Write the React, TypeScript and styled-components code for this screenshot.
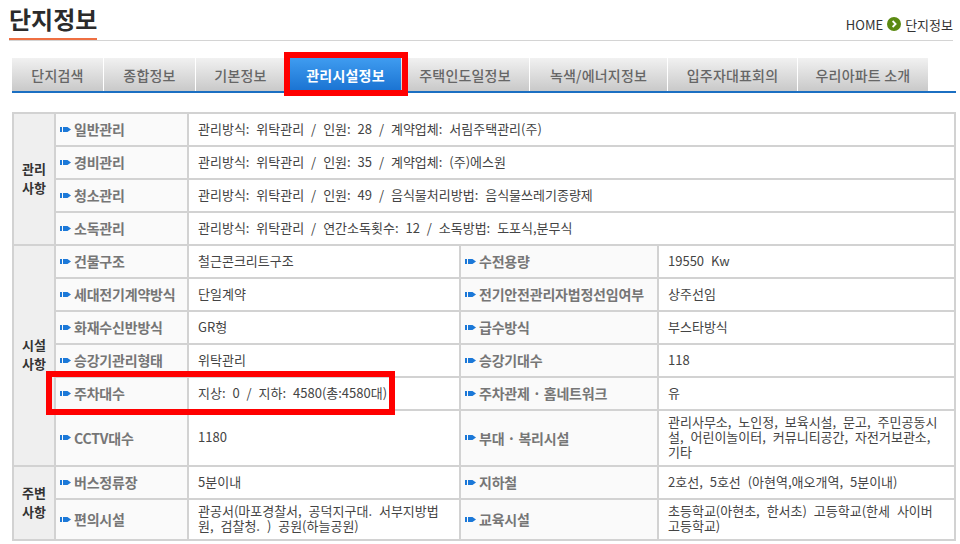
import React from "react";
import styled, { createGlobalStyle } from "styled-components";

const Global = createGlobalStyle`
  html, body { margin: 0; padding: 0; background: #fff; }
  body { font-family: "Noto Sans CJK KR", "Noto Sans", sans-serif; color: #333; width: 960px; height: 544px; overflow: hidden; }
`;

const Page = styled.div`
  position: relative;
  width: 960px;
  height: 544px;
  padding: 0 7px 0 9px;
  box-sizing: border-box;
`;

const Header = styled.header`
  display: flex;
  justify-content: space-between;
  align-items: flex-end;
  height: 41px;
  border-bottom: 1px solid #d4d4d4;
  box-sizing: border-box;
`;

const Title = styled.h1`
  margin: 0;
  height: 40px;
  box-sizing: border-box;
  border-bottom: 2px solid #ee6f42;
  font-size: 24px;
  line-height: 38px;
  font-weight: 700;
  color: #2b2b2b;
`;

const Crumb = styled.div`
  display: flex;
  align-items: center;
  gap: 4px;
  height: 40px;
  padding-top: 8px;
  box-sizing: border-box;
  font-size: 13px;
  color: #333;
`;

const TabBar = styled.nav`
  display: flex;
  margin: 17px 0 0 3px;
  width: 944px;
  height: 35px;
  box-sizing: border-box;
  border-bottom: 2px solid #1b6fc2;
`;

const Tab = styled.div<{ $w: number; $active?: boolean }>`
  flex: 0 0 ${(p) => p.$w}px;
  height: 33px;
  display: flex;
  align-items: center;
  justify-content: center;
  box-sizing: border-box;
  font-size: 14px;
  letter-spacing: 0.2px;
  font-weight: ${(p) => (p.$active ? 700 : 500)};
  color: ${(p) => (p.$active ? "#fff" : "#666")};
  background: ${(p) =>
    p.$active ? "linear-gradient(#3f9cf0, #1a73d2)" : "linear-gradient(#f1f1f1, #c9c9c9)"};
  border-right: ${(p) => (p.$active ? "0" : "1px solid #fff")};
`;

const TabGap = styled.div<{ $w: number }>`
  flex: 0 0 ${(p) => p.$w}px;
`;

const Table = styled.table`
  margin: 19px 0 0 3px;
  width: 944px;
  border-collapse: collapse;
  table-layout: fixed;
`;

const Group = styled.th`
  background: #efefef;
  border: 2px solid #d2d2d2;
  font-size: 13px;
  line-height: 19px;
  font-weight: 700;
  color: #333;
  padding: 0 0 3px;
`;

const Head = styled.th`
  background: #fafafa;
  border: 2px solid #d2d2d2;
  padding: 0 0 1px 4px;
  text-align: left;
  font-size: 14px;
  letter-spacing: -0.2px;
  font-weight: 700;
  color: #767676;
  white-space: nowrap;
`;

const HeadInner = styled.span`
  display: flex;
  align-items: center;
  gap: 3px;
`;

const Cell = styled.td`
  background: #fff;
  border: 2px solid #d2d2d2;
  padding: 0 9px 3px;
  font-size: 13px;
  word-spacing: 4px;
  line-height: 15px;
  color: #444;
`;

const Row = styled.tr<{ $h: number }>`
  height: ${(p) => p.$h}px;
`;

const RedBox = styled.div<{ $x: number; $y: number; $w: number; $h: number }>`
  position: absolute;
  left: ${(p) => p.$x}px;
  top: ${(p) => p.$y}px;
  width: ${(p) => p.$w}px;
  height: ${(p) => p.$h}px;
  box-sizing: border-box;
  border: 6px solid #ff0000;
`;

const Bullet = () => (
  <svg width="11" height="7" viewBox="0 0 11 7" aria-hidden="true">
    <rect x="0" y="1" width="2" height="5" fill="#1b78d8" />
    <path d="M3 1H7.5L11 3.5L7.5 6H3Z" fill="#1b78d8" />
  </svg>
);

const HomeDot = () => (
  <svg width="14" height="14" viewBox="0 0 14 14" aria-hidden="true">
    <circle cx="7" cy="7" r="7" fill="#5b8a12" />
    <path d="M5.6 4L8.6 7L5.6 10" fill="none" stroke="#fff" strokeWidth="1.8" />
  </svg>
);

const H = ({ children }: { children: React.ReactNode }) => (
  <Head>
    <HeadInner>
      <Bullet />
      {children}
    </HeadInner>
  </Head>
);

const tabs: [string, number][] = [
  ["단지검색", 92],
  ["종합정보", 92],
  ["기본정보", 90],
];
const tabsAfter: [string, number][] = [
  ["주택인도일정보", 129],
  ["녹색/에너지정보", 138],
  ["입주자대표회의", 130],
  ["우리아파트 소개", 131],
];

export default function App() {
  return (
    <Page>
      <Global />
      <Header>
        <Title>단지정보</Title>
        <Crumb>
          HOME <HomeDot /> 단지정보
        </Crumb>
      </Header>
      <TabBar>
        {tabs.map(([t, w]) => (
          <Tab key={t} $w={w}>{t}</Tab>
        ))}
        <TabGap $w={4} />
        <Tab $w={111} $active>관리시설정보</Tab>
        {tabsAfter.map(([t, w]) => (
          <Tab key={t} $w={w}>{t}</Tab>
        ))}
      </TabBar>
      <Table>
        <colgroup>
          <col style={{ width: 42 }} />
          <col style={{ width: 133 }} />
          <col style={{ width: 272 }} />
          <col style={{ width: 198 }} />
          <col />
        </colgroup>
        <tbody>
          <Row $h={33}>
            <Group rowSpan={4}>관리<br />사항</Group>
            <H>일반관리</H>
            <Cell colSpan={3}>관리방식: 위탁관리 / 인원: 28 / 계약업체: 서림주택관리(주)</Cell>
          </Row>
          <Row $h={33}>
            <H>경비관리</H>
            <Cell colSpan={3}>관리방식: 위탁관리 / 인원: 35 / 계약업체: (주)에스원</Cell>
          </Row>
          <Row $h={33}>
            <H>청소관리</H>
            <Cell colSpan={3}>관리방식: 위탁관리 / 인원: 49 / 음식물처리방법: 음식물쓰레기종량제</Cell>
          </Row>
          <Row $h={33}>
            <H>소독관리</H>
            <Cell colSpan={3}>관리방식: 위탁관리 / 연간소독횟수: 12 / 소독방법: 도포식,분무식</Cell>
          </Row>
          <Row $h={33}>
            <Group rowSpan={6}>시설<br />사항</Group>
            <H>건물구조</H>
            <Cell>철근콘크리트구조</Cell>
            <H>수전용량</H>
            <Cell>19550 Kw</Cell>
          </Row>
          <Row $h={33}>
            <H>세대전기계약방식</H>
            <Cell>단일계약</Cell>
            <H>전기안전관리자법정선임여부</H>
            <Cell>상주선임</Cell>
          </Row>
          <Row $h={33}>
            <H>화재수신반방식</H>
            <Cell>GR형</Cell>
            <H>급수방식</H>
            <Cell>부스타방식</Cell>
          </Row>
          <Row $h={33}>
            <H>승강기관리형태</H>
            <Cell>위탁관리</Cell>
            <H>승강기대수</H>
            <Cell>118</Cell>
          </Row>
          <Row $h={33}>
            <H>주차대수</H>
            <Cell>지상: 0 / 지하: 4580(총:4580대)</Cell>
            <H>주차관제 · 홈네트워크</H>
            <Cell>유</Cell>
          </Row>
          <Row $h={56}>
            <H>CCTV대수</H>
            <Cell>1180</Cell>
            <H>부대 · 복리시설</H>
            <Cell>관리사무소, 노인정, 보육시설, 문고, 주민공동시설, 어린이놀이터, 커뮤니티공간, 자전거보관소, 기타</Cell>
          </Row>
          <Row $h={33}>
            <Group rowSpan={2}>주변<br />사항</Group>
            <H>버스정류장</H>
            <Cell>5분이내</Cell>
            <H>지하철</H>
            <Cell>2호선, 5호선 (아현역,애오개역, 5분이내)</Cell>
          </Row>
          <Row $h={41}>
            <H>편의시설</H>
            <Cell>관공서(마포경찰서, 공덕지구대. 서부지방법원, 검찰청. ) 공원(하늘공원)</Cell>
            <H>교육시설</H>
            <Cell>초등학교(아현초, 한서초) 고등학교(한세 사이버 고등학교)</Cell>
          </Row>
        </tbody>
      </Table>
      <RedBox $x={284} $y={52} $w={124} $h={44} />
      <RedBox $x={46} $y={371} $w={349} $h={44} />
    </Page>
  );
}
